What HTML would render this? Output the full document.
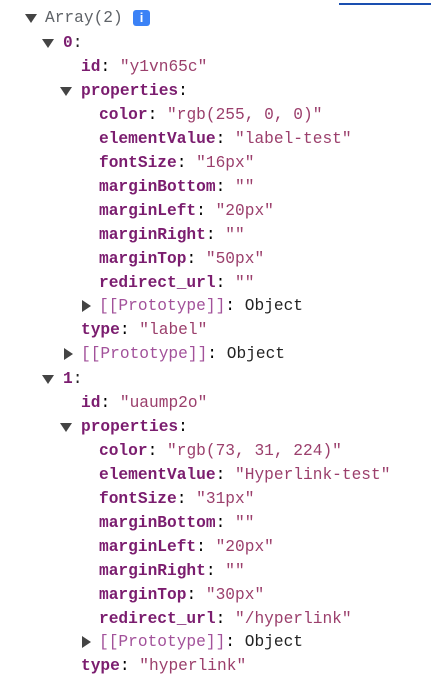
<!DOCTYPE html>
<html><head><style>
body{margin:0;width:431px;height:682px;background:#fff;overflow:hidden;position:relative;font-family:"Liberation Mono",monospace;font-size:16.2px}
.l{position:absolute;white-space:pre;line-height:24px;height:24px}
.k{color:#7b1d6f;font-weight:bold}
.s{color:#9b3f6c}
.p{color:#a2519a}
.o{color:#222}
.g{color:#5f6368}
.t{position:absolute;width:0;height:0}
.d{border-left:6px solid transparent;border-right:6px solid transparent;border-top:9px solid #444}
.r{border-top:6px solid transparent;border-bottom:6px solid transparent;border-left:9px solid #444}
</style></head><body>
<div style="position:absolute;left:339px;top:-10px;width:92px;height:13px;border-bottom:2px solid #1a4fb0;color:#1a4fb0;font-size:14px;overflow:hidden"></div>

<div class="t d" style="left:25px;top:14px"></div>
<div class="l g" style="left:45px;top:6px">Array(2)</div>
<div style="position:absolute;left:133px;top:10px;width:17px;height:16px;background:#3b82f6;border-radius:3px;color:#fff;font:bold 13px 'Liberation Sans',sans-serif;text-align:center;line-height:16px">i</div>

<div class="t d" style="left:42px;top:39px"></div>
<div class="l k" style="left:63px;top:31px">0<span class="o" style="font-weight:normal">:</span></div>
<div class="l" style="left:81px;top:55px"><span class="k">id</span>: <span class="s">"y1vn65c"</span></div>
<div class="t d" style="left:60px;top:87px"></div>
<div class="l" style="left:81px;top:79px"><span class="k">properties</span>:</div>
<div class="l" style="left:99px;top:103px"><span class="k">color</span>: <span class="s">"rgb(255, 0, 0)"</span></div>
<div class="l" style="left:99px;top:127px"><span class="k">elementValue</span>: <span class="s">"label-test"</span></div>
<div class="l" style="left:99px;top:151px"><span class="k">fontSize</span>: <span class="s">"16px"</span></div>
<div class="l" style="left:99px;top:175px"><span class="k">marginBottom</span>: <span class="s">""</span></div>
<div class="l" style="left:99px;top:199px"><span class="k">marginLeft</span>: <span class="s">"20px"</span></div>
<div class="l" style="left:99px;top:223px"><span class="k">marginRight</span>: <span class="s">""</span></div>
<div class="l" style="left:99px;top:247px"><span class="k">marginTop</span>: <span class="s">"50px"</span></div>
<div class="l" style="left:99px;top:271px"><span class="k">redirect_url</span>: <span class="s">""</span></div>
<div class="t r" style="left:82px;top:300px"></div>
<div class="l" style="left:99px;top:294px"><span class="p">[[Prototype]]</span>: <span class="o">Object</span></div>
<div class="l" style="left:81px;top:318px"><span class="k">type</span>: <span class="s">"label"</span></div>
<div class="t r" style="left:64px;top:348px"></div>
<div class="l" style="left:81px;top:342px"><span class="p">[[Prototype]]</span>: <span class="o">Object</span></div>

<div class="t d" style="left:42px;top:375px"></div>
<div class="l k" style="left:63px;top:367px">1<span class="o" style="font-weight:normal">:</span></div>
<div class="l" style="left:81px;top:391px"><span class="k">id</span>: <span class="s">"uaump2o"</span></div>
<div class="t d" style="left:60px;top:423px"></div>
<div class="l" style="left:81px;top:415px"><span class="k">properties</span>:</div>
<div class="l" style="left:99px;top:439px"><span class="k">color</span>: <span class="s">"rgb(73, 31, 224)"</span></div>
<div class="l" style="left:99px;top:463px"><span class="k">elementValue</span>: <span class="s">"Hyperlink-test"</span></div>
<div class="l" style="left:99px;top:487px"><span class="k">fontSize</span>: <span class="s">"31px"</span></div>
<div class="l" style="left:99px;top:511px"><span class="k">marginBottom</span>: <span class="s">""</span></div>
<div class="l" style="left:99px;top:535px"><span class="k">marginLeft</span>: <span class="s">"20px"</span></div>
<div class="l" style="left:99px;top:559px"><span class="k">marginRight</span>: <span class="s">""</span></div>
<div class="l" style="left:99px;top:583px"><span class="k">marginTop</span>: <span class="s">"30px"</span></div>
<div class="l" style="left:99px;top:607px"><span class="k">redirect_url</span>: <span class="s">"/hyperlink"</span></div>
<div class="t r" style="left:82px;top:636px"></div>
<div class="l" style="left:99px;top:630px"><span class="p">[[Prototype]]</span>: <span class="o">Object</span></div>
<div class="l" style="left:81px;top:654px"><span class="k">type</span>: <span class="s">"hyperlink"</span></div>
</body></html>
